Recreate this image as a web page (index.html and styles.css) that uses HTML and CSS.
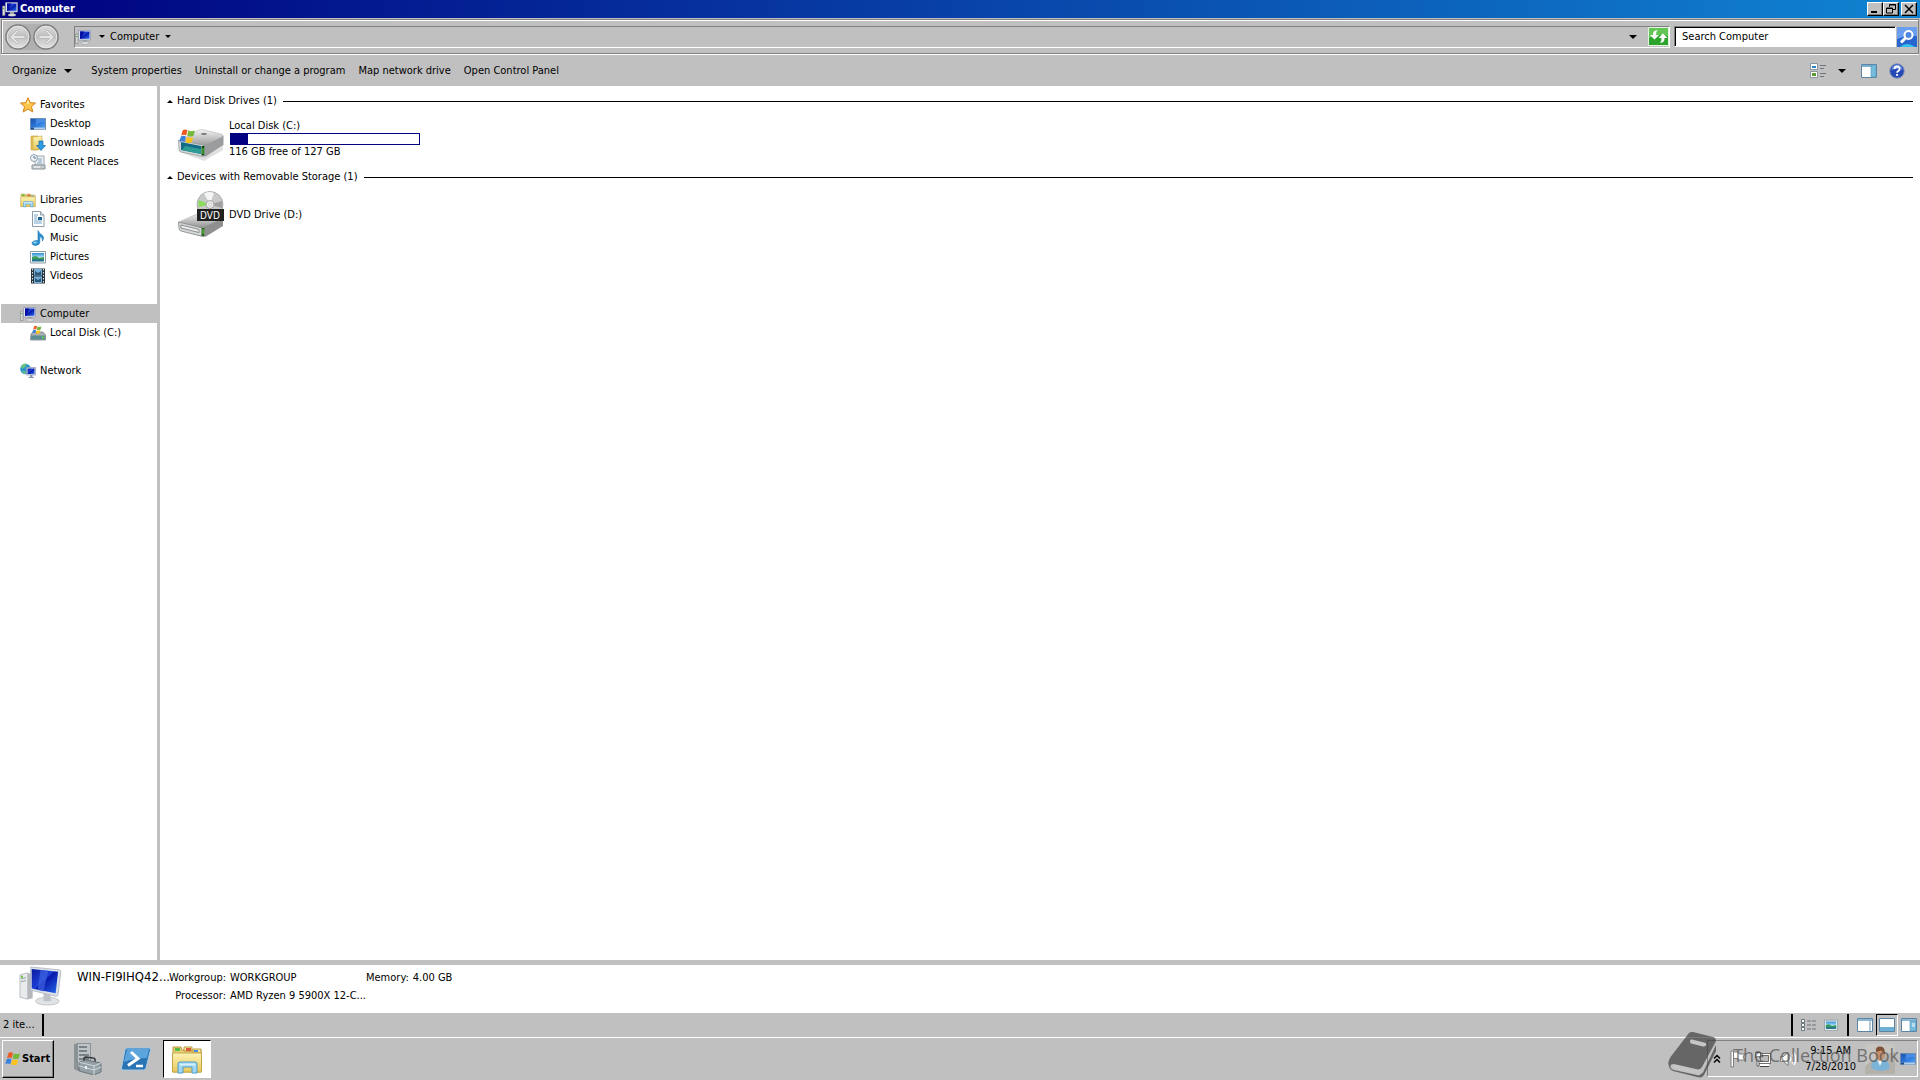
FILE: index.html
```html
<!DOCTYPE html>
<html lang="en">
<head>
  <meta charset="UTF-8">
  <title>Computer</title>
  <link rel="stylesheet" href="styles.css">
</head>
<body>
<!-- shared icons -->
<svg class="defs" width="0" height="0" aria-hidden="true">
  <defs>
    <linearGradient id="screen" x1="0" y1="0" x2="1" y2="1">
      <stop offset="0" stop-color="#0a1a9c"/><stop offset=".45" stop-color="#1c3fd8"/><stop offset=".5" stop-color="#0516a8"/><stop offset="1" stop-color="#2a6df0"/>
    </linearGradient>
    <linearGradient id="wallpaper" x1="0" y1="0" x2="1" y2="1">
      <stop offset="0" stop-color="#1c50a8"/><stop offset=".5" stop-color="#2c78dc"/><stop offset="1" stop-color="#58a8f4"/>
    </linearGradient>
    <linearGradient id="metal" x1="0" y1="0" x2="0" y2="1">
      <stop offset="0" stop-color="#f4f4f4"/><stop offset="1" stop-color="#8c8c8c"/>
    </linearGradient>
    <linearGradient id="folder" x1="0" y1="0" x2="0" y2="1">
      <stop offset="0" stop-color="#fdf3b4"/><stop offset="1" stop-color="#e9c85c"/>
    </linearGradient>
    <linearGradient id="sky" x1="0" y1="0" x2="0" y2="1">
      <stop offset="0" stop-color="#2b8fd6"/><stop offset=".6" stop-color="#c9ecf7"/><stop offset=".65" stop-color="#2c8f7c"/><stop offset="1" stop-color="#1b6a8e"/>
    </linearGradient>
    <linearGradient id="ball" x1="0" y1="0" x2="0" y2="1">
      <stop offset="0" stop-color="#dcdcdc"/><stop offset=".5" stop-color="#c0c0c0"/><stop offset="1" stop-color="#e6e6e6"/>
    </linearGradient>
    <symbol id="i-pc" viewBox="0 0 16 16">
      <path d="M.5 5h2.500v9.500h-2.500z" fill="#d8dcd8" stroke="#7c807c" stroke-width=".6"/>
      <path d="M1 7.500h1.500" stroke="#5fae3f"/>
      <path d="M3.500 1.500h12v9.500h-12z" fill="#dce4f4" stroke="#8c94ac" stroke-width=".7"/>
      <path d="M5 2.500h9.500v7.300H5z" fill="url(#screen)"/>
      <path d="M5 2.500h4l-2.500 7.300H5z" fill="#0510a0"/>
      <path d="M8 11h4v2H8z" fill="#a0a4a8"/><ellipse cx="10" cy="14" rx="4" ry="1.200" fill="#eceff0" stroke="#84888c" stroke-width=".5"/>
    </symbol>
    <symbol id="i-flag" viewBox="0 0 16 16">
      <path d="M3.500 2Q5.500.6 8 2L6.800 7Q4.500 5.800 2 7z" fill="#ec5a24"/>
      <path d="M8.800 2.400Q11.500 3.800 15 2.400L13.600 7.400Q11 8.600 7.700 7.400z" fill="#74b83a"/>
      <path d="M1.700 8Q4.200 6.800 6.500 8L5.300 13Q3 11.800.3 13z" fill="#3a82dc"/>
      <path d="M7.400 8.500Q10.500 9.700 13.300 8.500L12 13.500Q9.500 14.600 6.100 13.500z" fill="#fbc21c"/>
    </symbol>
    <symbol id="i-folders" viewBox="0 0 32 32">
      <path d="M2 4h8l1 3h19v22H2z" fill="#e8cf76" stroke="#b89a3e"/>
      <path d="M4 5h5v3H4z" fill="#58b848"/><path d="M13 4h8v4h-8z" fill="#f8e9a4" stroke="#b89a3e"/><path d="M15 5h5v3h-5z" fill="#d85a38"/>
      <path d="M22 6h8v4h-8z" fill="#f8e9a4" stroke="#b89a3e"/><path d="M23 7h4v2h-4z" fill="#4a90d8"/>
      <path d="M1.500 10h29v19h-29z" fill="url(#folder)" stroke="#c4a548"/>
      <path d="M7 30V21q0-2 2-2h15q2 0 2 2v9h-5v-6h-9v6z" fill="#9fd6f2" stroke="#4c9cc8"/>
      <path d="M8.500 20.500h16v2h-16z" fill="#d4effb"/>
    </symbol>
    <symbol id="i-desktop" viewBox="0 0 16 16">
      <path d="M.5 2.500h15v11H.5z" fill="url(#wallpaper)" stroke="#6c8cb4"/>
      <path d="M6 3h9v3Q10 5 6 9z" fill="#5c9cec" opacity=".6"/><path d="M1 11.500h14v2H1z" fill="#b4cce4"/><path d="M1 11.500h3v2H1z" fill="#1c4c84"/>
    </symbol>
    <symbol id="i-picture" viewBox="0 0 16 16">
      <path d="M.5 2.500h15v11.500H.5z" fill="#fff" stroke="#8c9aa4"/><path d="M2 4h12v8.500H2z" fill="url(#sky)"/><path d="M2 8l4-1 3 2 5-1v2H2z" fill="#3e9a58"/>
    </symbol>
  </defs>
</svg>

<header class="titlebar">
  <svg class="icon16" aria-hidden="true"><use href="#i-pc"/></svg>
  <h1>Computer</h1>
  <div class="window-buttons">
    <button aria-label="Minimize"><svg width="12" height="10"><path d="M2 8h6" stroke="#000" stroke-width="2"/></svg></button>
    <button aria-label="Restore"><svg width="12" height="10"><path d="M4.500 3V.5h6v5H8M4 1h7" fill="none" stroke="#000"/><path d="M1.500 4h6v5h-6zM1 4.500h7" fill="none" stroke="#000"/></svg></button>
    <button class="close" aria-label="Close"><svg width="12" height="10"><path d="M2 1l8 8M10 1L2 9" stroke="#000" stroke-width="1.500"/></svg></button>
  </div>
</header>

<nav class="navbar">
  <div class="travel">
    <button aria-label="Back"><svg width="26" height="26" viewBox="0 0 26 26"><circle cx="13" cy="13" r="12" fill="url(#ball)" stroke="#7c7f82" stroke-width="1.500"/><circle cx="13" cy="13" r="10.800" fill="none" stroke="#e4e4e4"/><path d="M12 6l-7 7 7 7 1.500-1.500-4-4H20v-3H9.500l4-4z" fill="#e4e4e4" stroke="#b0b0b0" stroke-width=".7"/></svg></button>
    <button aria-label="Forward"><svg width="26" height="26" viewBox="0 0 26 26"><circle cx="13" cy="13" r="12" fill="url(#ball)" stroke="#7c7f82" stroke-width="1.500"/><circle cx="13" cy="13" r="10.800" fill="none" stroke="#e4e4e4"/><path d="M14 6l7 7-7 7-1.500-1.500 4-4H6v-3h10.500l-4-4z" fill="#e4e4e4" stroke="#b0b0b0" stroke-width=".7"/></svg></button>
  </div>
  <div class="address">
    <svg class="icon16" aria-hidden="true"><use href="#i-pc"/></svg>
    <button class="crumb root" aria-label="Locations"><i class="arrow small"></i></button>
    <button class="crumb">Computer <i class="arrow small"></i></button>
    <button class="crumb history" aria-label="Previous locations"><i class="arrow"></i></button>
    <button class="refresh" aria-label="Refresh"><svg width="21" height="19" viewBox="0 0 21 19"><path d="M.5.500h20v18H.5z" fill="#2ba32c" stroke="#e4f4e0"/><path d="M1 1h19v8Q10 6 1 11z" fill="#62c555"/><path d="M9.500 3Q4.500 3.500 5 8H2l4.500 4.500L11 8H8Q7.700 5 9.500 3zM12 16q5-.5 4.500-5h3L15 6.500 10.500 11h3q.3 3-1.500 5z" fill="#fff"/></svg></button>
  </div>
  <form class="search">
    <input type="text" placeholder="Search Computer" aria-label="Search Computer">
    <button type="button" aria-label="Search"><svg width="20" height="20" viewBox="0 0 20 20"><path d="M0 0h20v20H0z" fill="#2867cf"/><path d="M0 0h20v9Q10 7 0 12z" fill="#6b9df0"/><path d="M3 20Q10 14 18 20z" fill="#35c3f0"/><circle cx="11.500" cy="8" r="4" fill="#4f85e0" stroke="#fff" stroke-width="2"/><path d="M8.500 11L4 15.500" stroke="#fff" stroke-width="3"/></svg></button>
  </form>
</nav>

<div class="commands">
  <button class="organize">Organize <i class="arrow"></i></button>
  <button>System properties</button>
  <button>Uninstall or change a program</button>
  <button>Map network drive</button>
  <button>Open Control Panel</button>
  <div class="view-tools">
    <button aria-label="Change your view"><svg width="16" height="16" viewBox="0 0 16 16"><path d="M.5.500h7v6h-7zM.5 8.500h7v6h-7z" fill="#fff" stroke="#8a96a0"/><path d="M2 3h4v2H2z" fill="#2c84c4"/><path d="M2 10h4v3H2z" fill="#5d9c2c"/><path d="M10 2.500h6M10 5.500h4M10 10.500h6M10 13.500h4" stroke="#6c7680"/></svg></button>
    <button class="more" aria-label="More options"><i class="arrow"></i></button>
    <button aria-label="Show the preview pane"><svg width="16" height="14" viewBox="0 0 16 14"><path d="M.5.500h15v13H.5z" fill="#fff" stroke="#5c84a4"/><path d="M1 1h14v2H1z" fill="#7cb0d0"/><path d="M10 1h5v12h-5z" fill="#74bcdc" stroke="#5c94b4" stroke-width=".6"/></svg></button>
    <button aria-label="Get help"><svg width="16" height="16" viewBox="0 0 16 16"><circle cx="8" cy="8" r="7.300" fill="#2448b4" stroke="#8c98b8"/><path d="M2.500 7a5.500 5.500 0 0 1 11 0Q8 5 2.500 7z" fill="#6488dc"/><path d="M5.500 6q0-2.500 2.600-2.500T10.600 6q0 1.300-1.500 2.100-1 .6-1 1.700" fill="none" stroke="#fff" stroke-width="1.800"/><path d="M7.100 11h2v1.800h-2z" fill="#fff"/></svg></button>
  </div>
</div>

<div class="workspace">
  <aside class="sidebar">
    <ul>
      <li class="top"><a href="#"><svg class="icon16" viewBox="0 0 16 16"><path d="M8 .7l2.200 4.900 5.300.5-4 3.500 1.300 5.400L8 12.100 3.200 15l1.300-5.400-4-3.500 5.300-.5z" fill="#fcc64c" stroke="#d4801c"/><path d="M8 3l1.300 3.500H6.500z" fill="#fff0b4"/></svg>Favorites</a></li>
      <li><a href="#"><svg class="icon16"><use href="#i-desktop"/></svg>Desktop</a></li>
      <li><a href="#"><svg class="icon16" viewBox="0 0 16 16"><path d="M1 1h7v14H1z" fill="#e6c45a" stroke="#c09c38" stroke-width=".6"/><path d="M3 2l9-1v13l-9 1z" fill="url(#folder)" stroke="#c8a440" stroke-width=".6"/><path d="M9 6h4v4.500h2.500L11 15.500 6.500 10.500H9z" fill="#2e9be4" stroke="#1668a8" stroke-width=".7"/></svg>Downloads</a></li>
      <li><a href="#"><svg class="icon16" viewBox="0 0 16 16"><path d="M5 2h9v9H5z" fill="#f0f4f6" stroke="#9ca4a8"/><path d="M7 5h5M8 7h4M7 9h5" stroke="#7ca4c4"/><path d="M2 11h13v4H2z" fill="#c4ccd0" stroke="#8c9498"/><path d="M4 13h6" stroke="#fff"/><circle cx="4" cy="4" r="3.500" fill="#eef4f8" stroke="#90a0ac"/><path d="M4 2v2h2" fill="none" stroke="#5078a0"/></svg>Recent Places</a></li>
    </ul>
    <ul>
      <li class="top"><a href="#"><svg class="icon16"><use href="#i-folders"/></svg>Libraries</a></li>
      <li><a href="#"><svg class="icon16" viewBox="0 0 16 16"><path d="M2.500.500h8l3.500 3.500v11.500H2.500z" fill="#fff" stroke="#8c9ca8"/><path d="M10.500.500V4H14" fill="#dce6ee" stroke="#8c9ca8"/><path d="M4 4h4M4 6h3M4 8h3M4 10h8M4 12h8" stroke="#74a4cc"/><path d="M8 6h4v3H8z" fill="#1c6494"/></svg>Documents</a></li>
      <li><a href="#"><svg class="icon16" viewBox="0 0 16 16"><path d="M8 .5q1 3 4 4.500 3 2.500.5 6Q13 7.500 9.800 6.500V12q0 3-4 3.500-3.800 0-3.800-2.400Q2.500 10.300 8 10.500z" fill="#2e94d4" stroke="#1870ac" stroke-width=".6"/><ellipse cx="5" cy="12.500" rx="1.800" ry="1" fill="#8cd4f4"/></svg>Music</a></li>
      <li><a href="#"><svg class="icon16"><use href="#i-picture"/></svg>Pictures</a></li>
      <li><a href="#"><svg class="icon16" viewBox="0 0 16 16"><path d="M1 .5h14v15H1z" fill="#28343c"/><path d="M4 1h8v6.500H4zM4 8.500h8V15H4z" fill="#74b0dc"/><path d="M5 3l3 2 3-2v4H5zM5 10l3 2 3-2v4H5z" fill="#2c5878"/><path d="M2.500 1v14M13.500 1v14" stroke="#dce4e8" stroke-dasharray="1.500 1.500"/></svg>Videos</a></li>
    </ul>
    <ul>
      <li class="top selected"><a href="#"><svg class="icon16"><use href="#i-pc"/></svg>Computer</a></li>
      <li><a href="#"><svg class="icon16" viewBox="0 0 16 16"><path d="M1 9l2-2h10l2.500 3v5H.5z" fill="#a8b0b4" stroke="#70787c" stroke-width=".7"/><path d="M1 10.500h14v4H1z" fill="#5c8c94"/><path d="M12 11.500h2v2h-2z" fill="#5cd43c"/><use href="#i-flag" x="2" y="0" width="10" height="10"/></svg>Local Disk (C:)</a></li>
    </ul>
    <ul>
      <li class="top"><a href="#"><svg class="icon16" viewBox="0 0 16 16"><circle cx="5.500" cy="6" r="5.300" fill="#2c94cc"/><path d="M1 3q4-3.500 6-2L5 4 2 6zM2 8l3 0 1 3Q3 11 2 8z" fill="#68c47c"/><path d="M6.500 4.500h9V12h-9z" fill="#d4dcec" stroke="#8c98b0" stroke-width=".7"/><path d="M7.500 5.500h7V11h-7z" fill="url(#screen)"/><path d="M10 12h2.500v2H10zM8.500 14h5.500v1H8.500z" fill="#8c98b0"/></svg>Network</a></li>
    </ul>
  </aside>

  <main class="content">
    <section>
      <h2><i class="arrow up"></i>Hard Disk Drives (1)</h2>
      <div class="drive">
        <svg class="drive-icon" viewBox="0 0 48 48" aria-hidden="true">
          <path d="M3 33l24 9 19-11v4L27 46 3 37z" fill="#000" opacity=".12"/>
          <path d="M2 26L22 15q2-1 5 0l17 4q3 1 2 3L28 33z" fill="url(#metal)" stroke="#b4b4b4" stroke-width=".6"/>
          <path d="M27 31L46.500 21v9L28 42z" fill="#9a9c9e"/>
          <path d="M1.500 25l24 5q3 .5 3 3v6q0 3-3 2.500L4 37q-2-.5-2-3z" fill="#d4d8da" stroke="#8c9092" stroke-width=".7"/>
          <path d="M4 27l20 4v8L4 35z" fill="#126c88"/><path d="M8 31l16 3v5L5 35z" fill="#2c9c94"/>
          <path d="M24.500 31h3v9.500h-3z" fill="#124c18"/><path d="M26 33v6" stroke="#54d43c"/>
          <ellipse cx="27" cy="19" rx="3" ry="1" fill="#777"/>
          <use href="#i-flag" x="2" y="13" width="17" height="17"/>
        </svg>
        <div class="drive-info">
          <span>Local Disk (C:)</span>
          <div class="capacity"><div class="used" style="width: 9%"></div></div>
          <span>116 GB free of 127 GB</span>
        </div>
      </div>
    </section>
    <section>
      <h2><i class="arrow up"></i>Devices with Removable Storage (1)</h2>
      <div class="drive">
        <svg class="drive-icon" viewBox="0 0 48 48" aria-hidden="true">
          <path d="M2 31L22 22q2-1 5 0l17 4q3 1 2 3L28 38z" fill="url(#metal)" stroke="#b4b4b4" stroke-width=".6"/>
          <path d="M27 36L46 27v8L28 46z" fill="#909090"/>
          <path d="M1.500 31l24 6q3 .5 3 3v3q0 3-3 2.500L4 40q-2-.5-2-3z" fill="#d4d8da" stroke="#808080" stroke-width=".8"/>
          <path d="M4 34l18 4.500v3L4 37z" fill="#eee" stroke="#777" stroke-width=".8"/>
          <path d="M24.500 37h3v8h-3z" fill="#285c20"/><path d="M26 38v5" stroke="#6cd43c"/>
          <circle cx="33" cy="13.500" r="13" fill="#c8caca" stroke="#989898" stroke-width=".7"/>
          <path d="M33 13.500L21.500 9v7z" fill="#8cdc5c"/><path d="M33 13.500L27 2.500q5-2.500 10-.6z" fill="#f4f4f4"/><path d="M33 13.500L45 10v7z" fill="#a0a0a0"/>
          <circle cx="33" cy="13.500" r="4" fill="#eee" stroke="#a4a4a4"/><circle cx="33" cy="13.500" r="1.500" fill="#fff" stroke="#999" stroke-width=".5"/>
          <path d="M20 18h27v12H20z" fill="#202020"/>
          <text x="33" y="27.500" text-anchor="middle" class="disc-label">DVD</text>
        </svg>
        <span>DVD Drive (D:)</span>
      </div>
    </section>
  </main>
</div>

<section class="details">
  <svg class="details-icon" viewBox="0 0 48 44" aria-hidden="true">
    <path d="M3 10l8-2v27l-8-2z" fill="#e8eaec" stroke="#a4a8ac" stroke-width=".7"/><path d="M11 8l5 2v24l-5 1z" fill="#b4b8bc"/><path d="M4 14l5-1M4 17l5-1" stroke="#8ca0a8"/><path d="M4 12h2" stroke="#68c42c" stroke-width="2"/>
    <ellipse cx="31" cy="37" rx="12" ry="4" fill="#e0e4e6" stroke="#b0b4b8" stroke-width=".7"/><path d="M27 29l7 1 1 7h-8z" fill="#c0c4c8"/>
    <path d="M14 2l29 3q2 0 1.800 2L42 30q0 2-2 2L15 26q-1.500 0-1.500-2z" fill="#dce2ea" stroke="#a8b0b8" stroke-width=".8"/>
    <path d="M15 4l27 3-2.500 22L15 24z" fill="url(#screen)"/><path d="M24 5l8 1-5 21-6-1.500z" fill="#3e62e0" opacity=".7"/>
  </svg>
  <strong class="host">WIN-FI9IHQ42...</strong>
  <dl>
    <dt>Workgroup:</dt><dd>WORKGROUP</dd>
    <dt>Processor:</dt><dd>AMD Ryzen 9 5900X 12-C...</dd>
  </dl>
  <dl>
    <dt>Memory:</dt><dd>4.00 GB</dd>
  </dl>
</section>

<div class="statusbar">
  <span class="count">2 ite...</span>
  <div class="status-tools view-mode">
    <button aria-label="Details"><svg width="16" height="12" viewBox="0 0 16 12"><path d="M.5.500h3v3h-3zM.5 4.500h3v3h-3zM.5 8.500h3v3h-3z" fill="#fff" stroke="#68747c"/><path d="M6 2h4M11 2h4M6 6h4M11 6h4M6 10h4M11 10h4" stroke="#68747c"/></svg></button>
    <button aria-label="Large icons"><svg width="14" height="14"><use href="#i-picture"/></svg></button>
  </div>
  <div class="status-tools panes">
    <button aria-label="Navigation pane"><svg width="16" height="14" viewBox="0 0 16 14"><path d="M.5.500h15v13H.5z" fill="#fff" stroke="#5c84a4"/><path d="M1 1h14v2H1z" fill="#8cb8d4"/><path d="M13 3v10" stroke="#5c94b4"/></svg></button>
    <button class="pressed" aria-label="Details pane"><svg width="16" height="14" viewBox="0 0 16 14"><path d="M.5.500h15v13H.5z" fill="#fff" stroke="#5c84a4"/><path d="M1 9h14v4H1z" fill="#6cb0d4"/></svg></button>
    <button aria-label="Preview pane"><svg width="16" height="14" viewBox="0 0 16 14"><path d="M.5.500h15v13H.5z" fill="#fff" stroke="#5c84a4"/><path d="M1 1h14v2H1z" fill="#8cb8d4"/><path d="M9 3h6v10H9z" fill="#74bcdc" stroke="#5c94b4" stroke-width=".6"/><path d="M11 6h3M11 8h3" stroke="#fff"/></svg></button>
  </div>
</div>

<footer class="taskbar">
  <button class="start"><svg class="icon16"><use href="#i-flag"/></svg>Start</button>
  <div class="pinned">
    <button aria-label="Server Manager"><svg width="32" height="32" viewBox="0 0 32 32"><path d="M4 1l4-1h13v24L8 28l-4-2z" fill="#8a9296"/><path d="M8 1h12v23H8z" fill="#bcc4c8"/><path d="M9 4h10M9 8h10M9 12h10M9 16h10M9 20h6" stroke="#646c70" stroke-width="1.500"/><path d="M17 4h2M17 8h2" stroke="#fff"/><path d="M14 18v-2q0-2 2-2l7 1q2 0 2 2v2" fill="none" stroke="#30383c" stroke-width="1.500"/><path d="M9 19l7-2 15 3v9l-7 3-15-4z" fill="#94a0a6" stroke="#5c686e" stroke-width=".8"/><path d="M9 19l15 4 7-3M24 23v9M9 23l15 4 7-3" fill="none" stroke="#d0d8dc"/><path d="M15 23h2v3h-2z" fill="#eee"/></svg></button>
    <button aria-label="Windows PowerShell"><svg width="32" height="32" viewBox="0 0 32 32"><path d="M7 5h22q2 0 1.500 2L26 25q-.5 2-2.500 2H3q-2 0-1.500-2L5 7q.5-2 2-2z" fill="#2874b4" stroke="#a8cce8"/><path d="M7 6h22l-2 9Q14 15 4 19z" fill="#5ca4dc"/><path d="M11 9l7 6.500-10 7" fill="none" stroke="#fff" stroke-width="3"/><path d="M16 23h7" stroke="#fff" stroke-width="2.500"/></svg></button>
    <button class="active" aria-label="Windows Explorer"><svg width="34" height="32"><use href="#i-folders"/></svg></button>
  </div>
  <div class="tray">
    <button aria-label="Show hidden icons"><svg width="8" height="10" viewBox="0 0 8 10"><path d="M1 4.500L4 1.500l3 3M1 8.500l3-3 3 3" fill="none" stroke="#000" stroke-width="1.500"/></svg></button>
    <button aria-label="Action Center"><svg width="16" height="18" viewBox="0 0 16 18"><path d="M1 1h2.500v16H1z" fill="#fff" stroke="#666" stroke-width=".8"/><path d="M3.500 2h5l1 2h5l-1.500 3 1.500 3H8.500l-1-1.500h-4z" fill="#fff" stroke="#666" stroke-width=".8"/></svg></button>
    <button aria-label="Network"><svg width="16" height="16" viewBox="0 0 16 16"><path d="M4.500 3.500h10v8h-10z" fill="#bbb" stroke="#fff" stroke-width="1.500"/><path d="M3.500 2.500h12v10h-12zM5.500 4.500h8v6h-8z" fill="none" stroke="#444" stroke-width=".7"/><path d="M5 14h9" stroke="#fff" stroke-width="2"/><path d="M5 15.500h9" stroke="#444"/><path d="M.5 1.500h5v5h-1.500V15H2V6.500H.5z" fill="#fff" stroke="#444" stroke-width=".8"/><path d="M2 0v2M4 0v2" stroke="#444"/></svg></button>
    <button aria-label="Volume"><svg width="16" height="16" viewBox="0 0 16 16"><path d="M.5 5.500h3L8 1.500v13L3.500 10.500h-3z" fill="#fff" stroke="#666" stroke-width=".8"/><path d="M10 5.500q1.500 2.500 0 5M12 3.500q3 4.500 0 9M14 2q3.500 6 0 12" fill="none" stroke="#fff" stroke-width="1.300"/></svg></button>
    <time class="clock">9:15 AM<br>7/28/2010</time>
    <button aria-label="User account"><svg width="30" height="30" viewBox="0 0 30 30"><path d="M0 0h30v30H0z" fill="#b4b0aa"/><path d="M0 0h30v8Q15 10 0 22z" fill="#c8c6c2"/><path d="M6 24q0-8 7-9h4q7 1 8 9-9 6-19 0z" fill="#7cb4d8"/><path d="M12 15l3 7 3-7z" fill="#eef4f8"/><ellipse cx="15" cy="10.500" rx="4.500" ry="6.500" fill="#c8906c"/><path d="M11 8Q10 2.500 15 2.500q6 0 4.500 9-1-4-3.500-5-2.500.5-5 1.500z" fill="#7c5034"/></svg></button>
    <button aria-label="Show desktop"><svg class="icon16"><use href="#i-desktop"/></svg></button>
  </div>
  <div class="watermark">
    <svg width="50" height="48" viewBox="0 0 50 48" aria-hidden="true">
      <path d="M4 31Q0 37 6 39l25 5.500 4-3L48 14v6L36 44q-2 3-5 2.500L5 40q-6-3-4-11z" fill="#404040"/>
      <path d="M5 33.500L32 40l-2 3L7 37.500q-3-1.500-2-4z" fill="#c8c8c8"/>
      <path d="M21 2q1.500-1.500 4-1l20 5q4 1 2.500 5L34 36q-1.500 3-5 2.300L6 33q-3 0-4.500 2-2-4 1-9z" fill="#404040"/>
      <path d="M22 10q0-2 2-1.500l13 3.200q2 .8 1 2.500t-3 1.300l-12-3q-1-.5-1-2.500z" fill="#c8c8c8"/>
    </svg>
    <span>The Collection Book</span>
  </div>
</footer>
</body>
</html>
```
FILE: styles.css
```css
* {
  box-sizing: border-box;
}
body {
  margin: 0;
  min-height: 100vh;
  display: flex;
  flex-direction: column;
  background: #c0c0c0;
  color: #000;
  font: 11px/14px "DejaVu Sans Condensed", "DejaVu Sans", sans-serif;
}
button {
  display: flex;
  align-items: center;
  padding: 0;
  border: none;
  background: none;
  color: inherit;
  font: inherit;
  white-space: nowrap;
}
svg {
  display: block;
  flex: none;
}
.defs {
  position: absolute;
}
.icon16 {
  width: 16px;
  height: 16px;
}
.arrow {
  border: 4px solid transparent;
  border-top-color: #000;
  border-bottom: none;
}
.arrow.small {
  border-width: 3px;
  border-bottom: none;
}
.arrow.up {
  border: 3px solid transparent;
  border-bottom-color: #000;
  border-top: none;
}

/* title bar */
.titlebar {
  display: flex;
  align-items: center;
  height: 18px;
  padding: 0 3px 0 2px;
  background: linear-gradient(to right, #000080, #1084d0);
  color: #fff;
}
.titlebar h1 {
  margin: 0 0 0 2px;
  font-size: 11px;
  font-weight: bold;
}
.window-buttons {
  display: flex;
  margin-left: auto;
}
.window-buttons button {
  width: 16px;
  height: 14px;
  justify-content: center;
  background: #c0c0c0;
  border: 1px solid;
  border-color: #fff #000 #000 #fff;
  box-shadow: inset -1px -1px #808080;
}
.window-buttons .close {
  margin-left: 2px;
}

/* address bar */
.navbar {
  display: flex;
  align-items: center;
  height: 35px;
  margin: 1px 1px 0;
  padding: 0 1px 0 3px;
  border: 1px solid #808080;
  box-shadow: inset 1px 1px #fff, 0 1px #fff;
}
.travel {
  display: flex;
  gap: 2px;
  margin-right: 15px;
  border-radius: 13px;
  background: #b0b0b0;
}
.address {
  display: flex;
  align-items: center;
  flex: 1;
  height: 22px;
  border: 1px solid;
  border-color: #808080 #fff #fff #808080;
}
.crumb {
  height: 18px;
  margin-left: 5px;
  gap: 6px;
}
.root {
  margin-left: 8px;
}
.history {
  margin: 0 11px 0 auto;
}
.search {
  display: flex;
  align-items: center;
  margin-left: 4px;
}
.search input {
  width: 222px;
  height: 21px;
  padding: 0 7px;
  border: 1px solid;
  border-color: #808080 #fff #fff #808080;
  box-shadow: inset 1px 1px #000;
  background: #fff;
  font: inherit;
}
.search input::placeholder {
  color: #000;
  opacity: 1;
}
.search button {
  margin-left: 1px;
}

/* command bar */
.commands {
  display: flex;
  align-items: center;
  gap: 13px;
  height: 32px;
  padding: 1px 15px 0 12px;
}
.commands button {
  gap: 8px;
}
.commands .organize {
  margin-right: 6px;
}
.view-tools {
  display: flex;
  align-items: center;
  gap: 12px;
  margin-left: auto;
}
.view-tools .more {
  margin-right: 3px;
}

/* folder tree */
.workspace {
  display: flex;
  flex: 1;
  background: #fff;
}
.sidebar {
  width: 160px;
  padding: 9px 0 0 1px;
  border-right: 3px solid #c0c0c0;
}
.sidebar ul {
  margin: 0 0 19px;
  padding: 0;
  list-style: none;
}
.sidebar a {
  display: flex;
  align-items: center;
  gap: 4px;
  height: 19px;
  padding-left: 29px;
  color: inherit;
  text-decoration: none;
}
.sidebar .top a {
  padding-left: 19px;
}
.selected {
  background: #c0c0c0;
}

/* drives */
.content {
  flex: 1;
  padding: 8px 7px 0;
}
.content h2 {
  display: flex;
  align-items: center;
  gap: 4px;
  margin: 0;
  font-size: 11px;
  font-weight: normal;
}
.content h2::after {
  content: "";
  flex: 1;
  height: 1px;
  margin-left: 2px;
  background: #000;
}
.drive {
  display: flex;
  align-items: center;
  gap: 4px;
  height: 62px;
  padding-left: 10px;
}
.drive-icon {
  width: 48px;
  height: 48px;
}
.disc-label {
  fill: #fff;
  font-size: 10px;
}
.drive-info {
  width: 191px;
}
.drive-info span {
  display: block;
}
.capacity {
  height: 12px;
  margin-left: 1px;
  border: 1px solid #000080;
}
.used {
  height: 100%;
  background: #000080;
}

/* details pane */
.details {
  display: flex;
  height: 53px;
  padding-left: 17px;
  border-top: 5px solid #c0c0c0;
  background: #fff;
}
.details-icon {
  width: 47px;
  height: 43px;
}
.host {
  width: 92px;
  margin: 4px 0 0 13px;
  font-size: 13px;
  line-height: 16px;
  font-weight: normal;
  white-space: nowrap;
}
.details dl {
  display: grid;
  grid-template-columns: auto auto;
  grid-auto-rows: 18px;
  column-gap: 4px;
  margin: 4px 0 0;
  line-height: 18px;
}
.details dt {
  text-align: right;
}
.details dd {
  margin: 0;
}

/* status bar */
.statusbar {
  display: flex;
  align-items: center;
  height: 24px;
  padding: 0 3px;
}
.count {
  width: 41px;
  line-height: 22px;
  border-right: 2px solid #000;
}
.status-tools {
  display: flex;
  align-items: center;
  height: 22px;
  border-left: 2px solid #000;
}
.view-mode {
  gap: 7px;
  width: 56px;
  margin-left: auto;
  padding-left: 8px;
}
.panes {
  gap: 3px;
  padding-left: 8px;
}
.pressed {
  width: 22px;
  height: 22px;
  justify-content: center;
  border: 1px solid;
  border-color: #000 #fff #fff #000;
}

/* taskbar */
.taskbar {
  position: relative;
  display: flex;
  align-items: center;
  height: 43px;
  padding: 0 2px 1px;
  border-top: 1px solid #fff;
}
.start {
  width: 52px;
  height: 38px;
  padding-left: 2px;
  border: 1px solid;
  border-color: #fff #000 #000 #fff;
  box-shadow: inset -1px -1px #808080;
  font-weight: bold;
}
.start .icon16 {
  margin-right: 1px;
}
.pinned {
  display: flex;
  align-items: center;
  margin-left: 7px;
}
.pinned button {
  width: 50px;
  height: 38px;
  justify-content: center;
}
.pinned .active {
  width: 48px;
  margin-left: 2px;
  background: #fff;
  border: 1px solid;
  border-color: #000 #fff #fff #000;
}
.tray {
  display: flex;
  align-items: center;
  gap: 9px;
  height: 37px;
  margin-left: auto;
  padding: 0 1px 0 5px;
  border: 1px solid;
  border-color: #808080 #fff #fff #808080;
}
.clock {
  line-height: 16px;
  text-align: center;
}
.tray button:last-child {
  margin-left: -4px;
}
.watermark {
  position: absolute;
  right: 21px;
  bottom: 1px;
  display: flex;
  align-items: center;
  gap: 15px;
  color: #505050;
  font: 18px/24px "Open Sans", sans-serif;
  opacity: 0.7;
  pointer-events: none;
}
```
